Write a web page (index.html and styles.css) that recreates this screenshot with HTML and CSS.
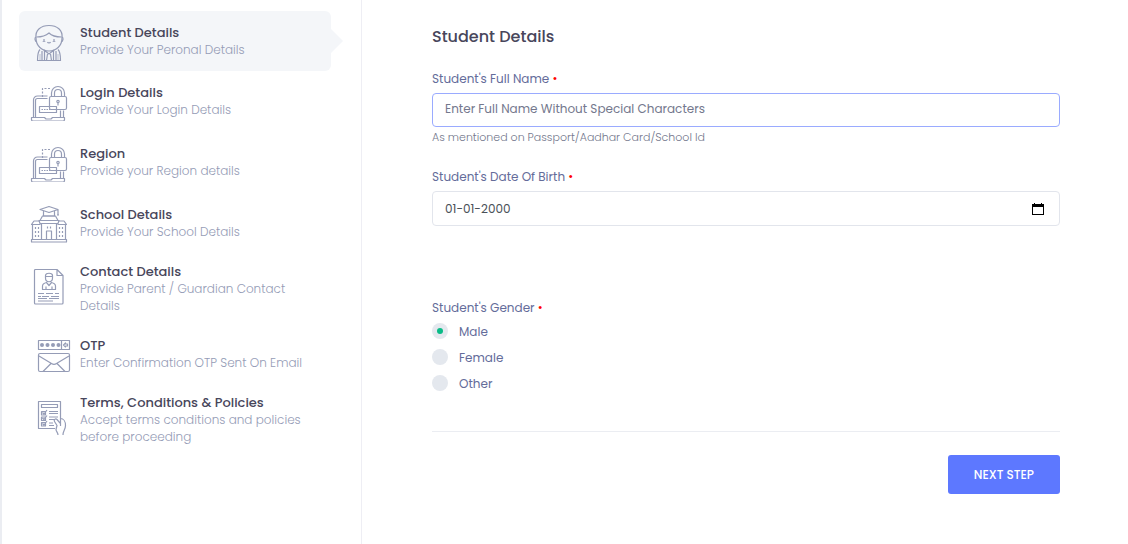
FILE: index.html
```html
<!DOCTYPE html>
<html lang="en">
<head>
<meta charset="utf-8">
<meta name="viewport" content="width=device-width, initial-scale=1">
<title>Student Registration</title>
<link rel="stylesheet" href="styles.css">
</head>
<body>
<svg class="sprite" aria-hidden="true">
  <symbol id="laptop-lock" viewBox="0 -1 40 40">
    <rect x="19.500" y="14.500" width="17" height="13" rx="1.500"/>
    <path d="M21.500 14.500V11a6.500 6.500 0 0 1 13 0v3.500M24.500 14.500V11a3.500 3.500 0 0 1 7 0v3.500"/>
    <path d="M28 20v3.500"/><circle cx="28" cy="19.500" r="1.200"/>
    <path d="M12.500 15V6.500H21" stroke-dasharray="2 1.500"/>
    <path d="M3.500 35.500V18a4 4 0 0 1 4-4H17.500M5.500 35.500V18.500a2 2 0 0 1 2-2H17.500M30.500 28.500v7M33.500 28.500v7"/>
    <path d="M1.500 35.500h13l1.500 1.500h5l1.500-1.500h12v2a1.500 1.500 0 0 1-1.500 1.500H3a1.500 1.500 0 0 1-1.500-1.500z"/>
    <path d="M9.500 24.500h17v6h-17z"/><path d="M11.500 27.500h9" stroke-dasharray="1.500 1"/>
  </symbol>
</svg>
<div class="wizard">
  <nav class="steps" aria-label="Registration steps">
    <a class="step step-active" href="#student" aria-current="step">
      <svg class="icon" viewBox="0 0 40 40" aria-hidden="true">
        <path d="M6 17C5 9 11 4.500 19 4.500S33 9 32 17c0 8-6 13-13 13S6 25 6 17z"/>
        <path d="M6.500 16c4 0 9-1 12.500-4 3 3 8 4 12.500 4"/>
        <path d="M6 16c-1.500.500-1.500 4 1 5M32 16c1.500.500 1.500 4-1 5"/>
        <path d="M14 18v3M24 18v3M17.500 21c.500 1.200 2.500 1.200 3 0"/><path class="soft" d="M12.500 20.500h3M22.500 20.500h3"/>
        <path d="M10 28.500c-2 2-2.500 7-2.500 11h23c0-4-.500-9-2.500-11M12 30v9.500M26 30v9.500"/>
        <path d="m14 29 5 4 5-4M14.500 30v9.500M23.500 30v9.500M17.500 33l-1 6.500M20.500 33l1 6.500"/><path class="soft" d="M10 33v6.500M28 33v6.500"/>
      </svg>
      <span class="step-text"><strong class="step-title">Student Details</strong><span class="step-desc">Provide Your Peronal Details</span></span>
    </a>
    <a class="step" href="#login">
      <svg class="icon" aria-hidden="true"><use href="#laptop-lock"/></svg>
      <span class="step-text"><strong class="step-title">Login Details</strong><span class="step-desc">Provide Your Login Details</span></span>
    </a>
    <a class="step" href="#region">
      <svg class="icon" aria-hidden="true"><use href="#laptop-lock"/></svg>
      <span class="step-text"><strong class="step-title">Region</strong><span class="step-desc">Provide your Region details</span></span>
    </a>
    <a class="step" href="#school">
      <svg class="icon" viewBox="0 0 40 40" aria-hidden="true">
        <path d="m10 6.500 9-3 9 3-9 3zM13.500 8v5h11V8M28 6.500V12M27 12h2"/>
        <path d="m12.500 13-2.500 4.500h18L25.500 13zM10 20.500h18l1-3H9z"/>
        <path d="M10 18H4l-2.500 3.500h9M28 18h6l2.500 3.500h-9M2.500 21.500V37M35.500 21.500V37M11.500 20.500V37M26.500 20.500V37"/>
        <path d="M1.500 36.500h35v2.500h-35zM16.500 36.500V28h5v8.500"/>
        <path d="M5.500 24v2M8.500 24v2M5.500 28v2M8.500 28v2M5.500 32v2M8.500 32v2M29.500 24v2M32.500 24v2M29.500 28v2M32.500 28v2M29.500 32v2M32.500 32v2M17.500 23.500v2M20.500 23.500v2"/>
      </svg>
      <span class="step-text"><strong class="step-title">School Details</strong><span class="step-desc">Provide Your School Details</span></span>
    </a>
    <a class="step" href="#contact">
      <svg class="icon" viewBox="0 -1 40 40" aria-hidden="true">
        <path d="M4.500.500a1 1 0 0 1 1-1H27l6 6V33a1 1 0 0 1-1 1H5.500a1 1 0 0 1-1-1zM27-.500v6h6"/>
        <path d="M15.500 8V5.500c0-3 7-3 7 0V8c0 5-7 5-7 0zM15.500 6.500h7"/>
        <path d="M12.500 19.500V16c0-2 2-3 4-3.500l2.500 3 2.500-3c2 .500 4 1.500 4 3.500v3.500zM16 16.500v3M22 16.500v3"/>
        <path d="M8 23.500h6m2 0h7m2 0h4M8 26.500h3m1 0h7m2 0h8M8 28.500h9m2 0h10M8 31h15"/>
      </svg>
      <span class="step-text"><strong class="step-title">Contact Details</strong><span class="step-desc">Provide Parent / Guardian Contact Details</span></span>
    </a>
    <a class="step" href="#otp">
      <svg class="icon" viewBox="0 -1 40 40" aria-hidden="true">
        <path d="M8.500 5.500h31v9h-31zM31.500 5.500v9"/>
        <g class="dots"><circle cx="12" cy="10" r="2"/><circle cx="17.500" cy="10" r="2"/><circle cx="23" cy="10" r="2"/><circle cx="28.500" cy="10" r="2"/></g>
        <path d="m33.500 10 2-2v1h2v2h-2v1z"/>
        <rect x="8.500" y="18.500" width="31" height="18" rx="1.500"/>
        <path d="m9 21 12.500 7.500c1.500 1 3.500 1 5 0L39 21M13 36.500l8-8M35 36.500l-8-8"/>
      </svg>
      <span class="step-text"><strong class="step-title">OTP</strong><span class="step-desc">Enter Confirmation OTP Sent On Email</span></span>
    </a>
    <a class="step" href="#terms">
      <svg class="icon" viewBox="0 -1 40 40" aria-hidden="true">
        <path d="M25 27.500H8.500V.500h22V19M11.500 3.500h16v3h-16z"/>
        <path d="M11.500 10.500h4v3.500h-4zM11.500 16h4v3.500h-4zM11.500 21.500h4V25h-4zM12.500 11.500l1.500 1.500 3-4M12.500 17l1.500 1.500 3-4M12.500 22.500l1.500 1.500 3-4"/>
        <path d="M19 10.500h9M19 12.500h9M19 16h9M19 18.500h6M19 22h4M19 24.500h5"/>
        <path d="m30 22-3-3.500c-1.500-1.500-3.500.500-2.500 2l2.500 4-1 4c0 2 2 3 2 5.500M30.500 19v6M30.500 17.500c3 0 5 3 5 7 0 4-2.500 5-2.500 9.500"/>
      </svg>
      <span class="step-text"><strong class="step-title">Terms, Conditions &amp; Policies</strong><span class="step-desc">Accept terms conditions and policies before proceeding</span></span>
    </a>
  </nav>
  <main class="content" id="student">
    <form>
      <h1 class="heading">Student Details</h1>
      <div class="field">
        <label class="label" for="name">Student's Full Name <span class="required">•</span></label>
        <input class="control control-focus" id="name" type="text" placeholder="Enter Full Name Without Special Characters" aria-describedby="name-help">
        <small class="help" id="name-help">As mentioned on Passport/Aadhar Card/School Id</small>
      </div>
      <div class="field field-date">
        <label class="label" for="dob">Student's Date Of Birth <span class="required">•</span></label>
        <div class="control date-control">
          <input class="date-input" id="dob" type="text" inputmode="numeric" value="01-01-2000">
          <button class="date-button" type="button" aria-label="Open calendar">
            <svg class="calendar" viewBox="0 0 12 12" aria-hidden="true"><path d="M2 0h1v1h6V0h1v1h2v11H0V1h2zM1 4v7h10V4z"/></svg>
          </button>
        </div>
      </div>
      <fieldset class="gender">
        <legend class="label">Student's Gender <span class="required">•</span></legend>
        <label class="option"><input class="radio" type="radio" name="gender" checked>Male</label>
        <label class="option"><input class="radio" type="radio" name="gender">Female</label>
        <label class="option"><input class="radio" type="radio" name="gender">Other</label>
      </fieldset>
      <div class="actions"><button class="next" type="button">Next Step</button></div>
    </form>
  </main>
</div>
</body>
</html>
```
FILE: styles.css
```css
* { box-sizing: border-box; }
body {
  margin: 0;
  background: #fff;
  font-family: Poppins, Inter, "Open Sans", sans-serif;
  font-size: 12px;
  line-height: 17px;
  color: #646c9a;
}
.sprite { display: none; }
.wizard {
  display: flex;
  min-height: 100vh;
  border-left: 2px solid #ebedf2;
}
.steps {
  flex: 0 0 360px;
  display: flex;
  flex-direction: column;
  padding: 11px 30px 16px 17px;
  border-right: 1px solid #eeeef4;
}
.step {
  position: relative;
  display: flex;
  align-items: center;
  gap: 10px;
  min-height: 60px;
  margin-bottom: 1px;
  padding: 9px 24px 9px 11px;
  border-radius: 6px;
  text-decoration: none;
}
.step-active {
  margin-bottom: 0;
  background: #f4f6f9;
}
.step-active::after {
  content: "";
  position: absolute;
  left: 100%;
  top: 50%;
  margin-top: -12px;
  border: 12px solid transparent;
  border-left-color: #f4f6f9;
  border-right-width: 0;
}
.icon {
  flex: none;
  width: 40px;
  height: 40px;
  overflow: visible;
  fill: none;
  stroke: #959cb6;
  stroke-width: 1.2;
  stroke-linejoin: round;
}
.soft { opacity: 0.5; }
.dots { fill: #959cb6; stroke: none; }
.step-text { display: flex; flex-direction: column; }
.step-title {
  font-size: 13px;
  font-weight: 500;
  color: #48465b;
}
.step-desc {
  font-weight: 300;
  color: #959cb6;
}
.content {
  flex: 1;
  min-width: 0;
  padding: 25px 68px 50px 70px;
}
.heading {
  margin: 0 0 21px;
  font-size: 16px;
  line-height: 24px;
  font-weight: 500;
  color: #48465b;
}
.field { margin-bottom: 22px; }
.label {
  display: block;
  margin-bottom: 5px;
  padding: 0;
  line-height: 18px;
}
.required { color: #f00; }
.control {
  display: block;
  width: 100%;
  height: 34px;
  padding: 0 12px 2px;
  border: 1px solid #e2e5ec;
  border-radius: 4px;
  background: #fff;
  font: inherit;
  color: #495057;
  outline: none;
}
.control-focus { border-color: #9aabff; }
.control::placeholder { color: #74788d; opacity: 1; }
.help {
  display: block;
  margin-top: 2px;
  font-size: 11px;
  font-weight: 300;
  color: #74788d;
}
.field-date { margin-bottom: 73px; }
.date-control {
  display: flex;
  align-items: center;
  height: 35px;
  padding: 0 15px 0 12px;
}
.date-input {
  flex: 1;
  min-width: 0;
  padding: 0;
  border: 0;
  background: none;
  font: inherit;
  color: inherit;
  outline: none;
}
.date-button {
  display: flex;
  padding: 0;
  border: 0;
  background: none;
}
.calendar { width: 12px; height: 12px; fill: #000; fill-rule: evenodd; }
.gender {
  margin: 0 0 35px;
  padding: 0;
  border: 0;
}
.gender .label { margin-bottom: 1px; }
.option {
  display: flex;
  align-items: center;
  gap: 11px;
  height: 26px;
}
.radio {
  appearance: none;
  flex: none;
  display: grid;
  place-items: center;
  width: 16px;
  height: 16px;
  margin: 0;
  border-radius: 50%;
  background: #e4e8ee;
}
.radio:checked::before {
  content: "";
  width: 6px;
  height: 6px;
  border-radius: 50%;
  background: #0abb87;
}
.actions {
  display: flex;
  justify-content: flex-end;
  padding-top: 23px;
  border-top: 1px solid #ebedf2;
}
.next {
  height: 39px;
  padding: 0 26px;
  border: 0;
  border-radius: 3px;
  background: #5d78ff;
  font: inherit;
  font-weight: 500;
  text-transform: uppercase;
  color: #fff;
}
```
